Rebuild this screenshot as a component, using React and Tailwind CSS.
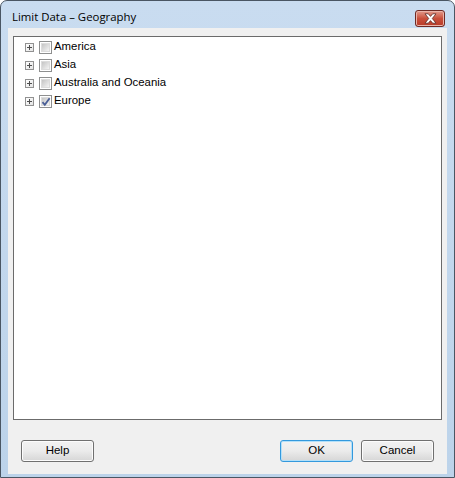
import React from 'react';

const items = [
  { label: 'America', checked: false },
  { label: 'Asia', checked: false },
  { label: 'Australia and Oceania', checked: false },
  { label: 'Europe', checked: true },
];

const Expander = () => (
  <div className="w-[9px] h-[9px] border border-[#919191] bg-gradient-to-br from-white to-[#e4e4e4] flex items-center justify-center relative">
    <div className="absolute w-[5px] h-[1px] bg-[#4e4e4e]" />
    <div className="absolute w-[1px] h-[5px] bg-[#4e4e4e]" />
  </div>
);

const CheckBox = ({ checked }) => (
  <div className="w-[13px] h-[13px] border border-[#8e8f8f] bg-white p-[1px] relative">
    <div className="w-full h-full bg-gradient-to-br from-[#c4c4c4] to-[#f4f4f4] border border-[#dcdcdc]" />
    {checked && (
      <svg className="absolute left-[1px] top-[1px]" width="10" height="10" viewBox="0 0 10 10">
        <path d="M1.5 5.2 L3.8 7.8 L8.6 1.2" fill="none" stroke="#4a5f97" strokeWidth="1.8" />
      </svg>
    )}
  </div>
);

const Button = ({ children, primary }) => (
  <button
    className={
      'w-[73px] h-[22px] rounded-[3px] border text-[11.5px] text-black bg-gradient-to-b from-[#f2f2f2] via-[#ebebeb] to-[#d6d6d6] ' +
      (primary ? 'border-[#3399dd] shadow-[inset_0_0_0_1px_#b3e0f9]' : 'border-[#707070] shadow-[inset_0_0_0_1px_#fcfcfc]')
    }
    style={{ fontFamily: '"Liberation Sans", Arial, sans-serif' }}
  >
    {children}
  </button>
);

export default function App() {
  return (
    <div className="w-[455px] h-[478px] rounded-t-[7px] border border-[#4a5663] bg-gradient-to-b from-[#c9dcf0] to-[#bcd3ea] flex flex-col px-[7px] pb-[3px]">
      {/* Title bar */}
      <div className="h-[27px] flex items-start justify-between">
        <div
          className="pl-[4px] pt-[9px] text-[11.4px] leading-[14px] text-black"
          style={{ fontFamily: '"Open Sans", "Noto Sans", sans-serif' }}
        >
          Limit Data – Geography
        </div>
        <div className="mt-[9px] mr-[2px] w-[30px] h-[17px] rounded-[3px] border border-[#6e2a24] bg-gradient-to-b from-[#e29a8c] via-[#c94f3b] to-[#b83a28] shadow-[inset_0_0_0_1px_#eab4a9] flex items-center justify-center">
          <svg width="15" height="11" viewBox="0 0 15 11">
            <path
              d="M2 0.8 L5.3 0.8 L7.5 3.4 L9.7 0.8 L13 0.8 L9.3 5.5 L13 10.2 L9.7 10.2 L7.5 7.6 L5.3 10.2 L2 10.2 L5.7 5.5 Z"
              fill="#ffffff"
              stroke="#5a2a26"
              strokeWidth="0.8"
              strokeLinejoin="round"
            />
          </svg>
        </div>
      </div>

      {/* Client area */}
      <div className="flex-1 bg-[#f0f0f0] flex flex-col px-[5px] pt-[8px] pb-[12px]">
        <div className="h-[384px] border border-[#6b6b6b] bg-white pt-[1px]">
          {items.map((it) => (
            <div key={it.label} className="h-[18px] flex items-center pl-[11px]">
              <Expander />
              <div className="ml-[5px]">
                <CheckBox checked={it.checked} />
              </div>
              <span
                className="ml-[2px] text-[11.4px] text-black"
                style={{ fontFamily: '"Liberation Sans", Arial, sans-serif' }}
              >
                {it.label}
              </span>
            </div>
          ))}
        </div>

        <div className="mt-[20px] flex items-center px-[8px]">
          <Button>Help</Button>
          <div className="flex-1" />
          <div className="flex gap-[8px]">
            <Button primary>OK</Button>
            <Button>Cancel</Button>
          </div>
        </div>
      </div>
    </div>
  );
}
